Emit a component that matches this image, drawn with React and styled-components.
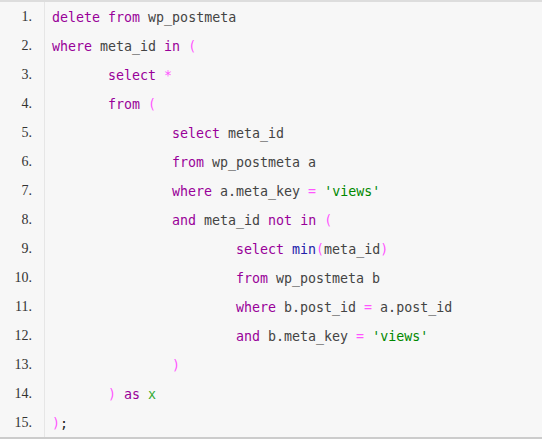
import React from "react"
import styled, { createGlobalStyle } from "styled-components"

const GlobalStyle = createGlobalStyle`
  html, body {
    margin: 0;
    padding: 0;
    background: #fff;
  }
`

const COLORS = {
  kw: "#990099",
  id: "#444444",
  op: "#ff55ff",
  str: "#008800",
  fn: "#2222aa",
  lit: "#33aa33",
  pun: "#222222",
}

const CodeBlock = styled.div`
  width: 542px;
  height: 439px;
  box-sizing: border-box;
  background: #f7f7f7;
  border-top: 2px solid #dddddd;
  border-bottom: 2px solid #cccccc;
  display: flex;
  flex-direction: column;
`

const Row = styled.div`
  display: grid;
  grid-template-columns: 45px 1fr;
  height: 29px;
`

const Num = styled.div`
  border-right: 1px solid #e6e6e6;
  padding-right: 12px;
  padding-top: 1px;
  display: flex;
  align-items: center;
  justify-content: flex-end;
  font-family: "Liberation Serif", serif;
  font-size: 14px;
  color: #333;
`

const Code = styled.div`
  display: flex;
  align-items: center;
  padding-top: 1px;
  padding-left: ${p => 7 + p.$indent}px;
  font-family: "DejaVu Sans Mono", monospace;
  font-size: 13.3px;
  white-space: pre;
`

const Tok = styled.span`
  color: ${p => COLORS[p.$kind]};
`

const LINES = [
  [0, [["kw", "delete"], ["id", " "], ["kw", "from"], ["id", " wp_postmeta"]]],
  [0, [["kw", "where"], ["id", " meta_id "], ["kw", "in"], ["id", " "], ["op", "("]]],
  [1, [["kw", "select"], ["id", " "], ["op", "*"]]],
  [1, [["kw", "from"], ["id", " "], ["op", "("]]],
  [2, [["kw", "select"], ["id", " meta_id"]]],
  [2, [["kw", "from"], ["id", " wp_postmeta a"]]],
  [2, [["kw", "where"], ["id", " a.meta_key "], ["op", "="], ["id", " "], ["str", "'views'"]]],
  [2, [["kw", "and"], ["id", " meta_id "], ["kw", "not"], ["id", " "], ["kw", "in"], ["id", " "], ["op", "("]]],
  [3, [["kw", "select"], ["id", " "], ["fn", "min"], ["op", "("], ["id", "meta_id"], ["op", ")"]]],
  [3, [["kw", "from"], ["id", " wp_postmeta b"]]],
  [3, [["kw", "where"], ["id", " b.post_id "], ["op", "="], ["id", " a.post_id"]]],
  [3, [["kw", "and"], ["id", " b.meta_key "], ["op", "="], ["id", " "], ["str", "'views'"]]],
  [2, [["op", ")"]]],
  [1, [["op", ")"], ["id", " "], ["kw", "as"], ["id", " "], ["lit", "x"]]],
  [0, [["op", ")"], ["pun", ";"]]],
]

const indentPx = level => (level === 0 ? 0 : 56 + (level - 1) * 64)

const App = () => (
  <>
    <GlobalStyle />
    <CodeBlock>
      {LINES.map(([level, tokens], i) => (
        <Row key={i}>
          <Num>{i + 1}.</Num>
          <Code $indent={indentPx(level)}>
            {tokens.map(([kind, text], j) => (
              <Tok key={j} $kind={kind}>
                {text}
              </Tok>
            ))}
          </Code>
        </Row>
      ))}
    </CodeBlock>
  </>
)

export default App
